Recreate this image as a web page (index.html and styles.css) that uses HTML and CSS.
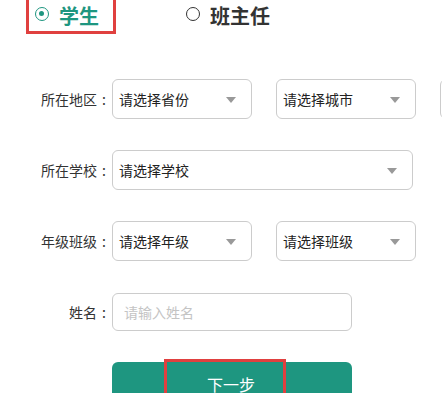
FILE: index.html
```html
<!DOCTYPE html>
<html lang="zh-CN">
<head>
    <meta charset="UTF-8">
    <meta name="viewport" content="width=device-width, initial-scale=1.0">
    <title>注册</title>
    <link rel="stylesheet" href="styles.css">
</head>
<body>
    <div class="role-tabs">
        <label class="role-tab active"><span class="radio checked"></span>学生</label>
        <label class="role-tab"><span class="radio"></span>班主任</label>
    </div>

    <form class="reg-form">
        <div class="form-row">
            <span class="form-label">所在地区<span class="colon">:</span></span>
            <div class="select half"><span>请选择省份</span><i class="caret"></i></div>
            <div class="select half"><span>请选择城市</span><i class="caret"></i></div>
            <div class="select half"></div>
        </div>
        <div class="form-row">
            <span class="form-label">所在学校<span class="colon">:</span></span>
            <div class="select wide"><span>请选择学校</span><i class="caret"></i></div>
        </div>
        <div class="form-row">
            <span class="form-label">年级班级<span class="colon">:</span></span>
            <div class="select half"><span>请选择年级</span><i class="caret"></i></div>
            <div class="select half"><span>请选择班级</span><i class="caret"></i></div>
        </div>
        <div class="form-row">
            <span class="form-label">姓名<span class="colon">:</span></span>
            <input class="text-input" type="text" placeholder="请输入姓名">
        </div>
        <div class="form-row btn-row">
            <button type="button" class="next-btn"><span class="next-label">下一步</span></button>
        </div>
    </form>
</body>
</html>
```

FILE: styles.css
```css
html, body {
    margin: 0;
    padding: 0;
    background: #fff;
    overflow: hidden;
}
body {
    font-family: "Noto Sans CJK SC", "Microsoft YaHei", sans-serif;
    color: #333;
    width: 442px;
    height: 393px;
}

/* role switch */
.role-tabs {
    display: flex;
    align-items: flex-start;
    margin-top: -3px;
    height: 37px;
}
.role-tab {
    display: flex;
    align-items: center;
    box-sizing: border-box;
    height: 37px;
    padding: 0 14px 0 6px;
    border: 3px solid transparent;
    font-size: 20px;
    font-weight: bold;
    line-height: 20px;
    color: #333;
}
.role-tab:first-child {
    margin-left: 26px;
}
.role-tab + .role-tab {
    margin-left: 61px;
}
.role-tab.active {
    border-color: #e0403f;
    color: #1e9680;
}
.radio {
    box-sizing: border-box;
    width: 14px;
    height: 14px;
    border: 1.5px solid #333;
    border-radius: 50%;
    margin-right: 10px;
    margin-top: -4px;
    position: relative;
}
.radio.checked {
    border-color: #1e9680;
}
.radio.checked::after {
    content: "";
    position: absolute;
    left: 3px;
    top: 3px;
    width: 5px;
    height: 5px;
    border-radius: 50%;
    background: #1e9680;
}

/* form */
.reg-form {
    margin-top: 45px;
}
.form-row {
    display: flex;
    align-items: center;
    height: 40px;
    margin-bottom: 31px;
    white-space: nowrap;
}
.form-label {
    flex: none;
    width: 111px;
    margin-right: 1px;
    text-align: right;
    font-size: 14px;
    line-height: 20px;
    color: #333;
}
.colon {
    display: inline-block;
    width: 14px;
    text-align: center;
}
.select {
    flex: none;
    position: relative;
    box-sizing: border-box;
    height: 40px;
    padding-left: 6px;
    display: flex;
    align-items: center;
    border: 1px solid #ccc;
    border-radius: 6px;
    font-size: 14px;
    color: #222;
    background: #fff;
}
.select.half {
    width: 140px;
    margin-right: 24px;
}
.select.wide {
    width: 301px;
}
.caret {
    position: absolute;
    right: 15px;
    top: 17px;
    width: 0;
    height: 0;
    border-left: 5px solid transparent;
    border-right: 5px solid transparent;
    border-top: 6px solid #999;
}
.text-input {
    box-sizing: border-box;
    width: 240px;
    height: 38px;
    padding: 0 11px;
    border: 1px solid #ccc;
    border-radius: 6px;
    font-family: inherit;
    font-size: 14px;
    color: #333;
    outline: none;
}
.text-input::placeholder {
    color: #c4c4c4;
}
.btn-row {
    padding-left: 112px;
    margin-top: -1px;
}
.next-btn {
    box-sizing: border-box;
    width: 240px;
    height: 44px;
    margin-top: 4px;
    border: none;
    border-radius: 6px;
    background: #1e9680;
    color: #fff;
    font-family: inherit;
    font-size: 16px;
    display: flex;
    justify-content: center;
    padding: 0;
}
.next-label {
    box-sizing: border-box;
    width: 122px;
    height: 44px;
    margin-top: -3px;
    margin-left: -14px;
    padding: 12px 0 0 40px;
    border: 3px solid #e0403f;
    text-align: left;
    line-height: 20px;
}
```
